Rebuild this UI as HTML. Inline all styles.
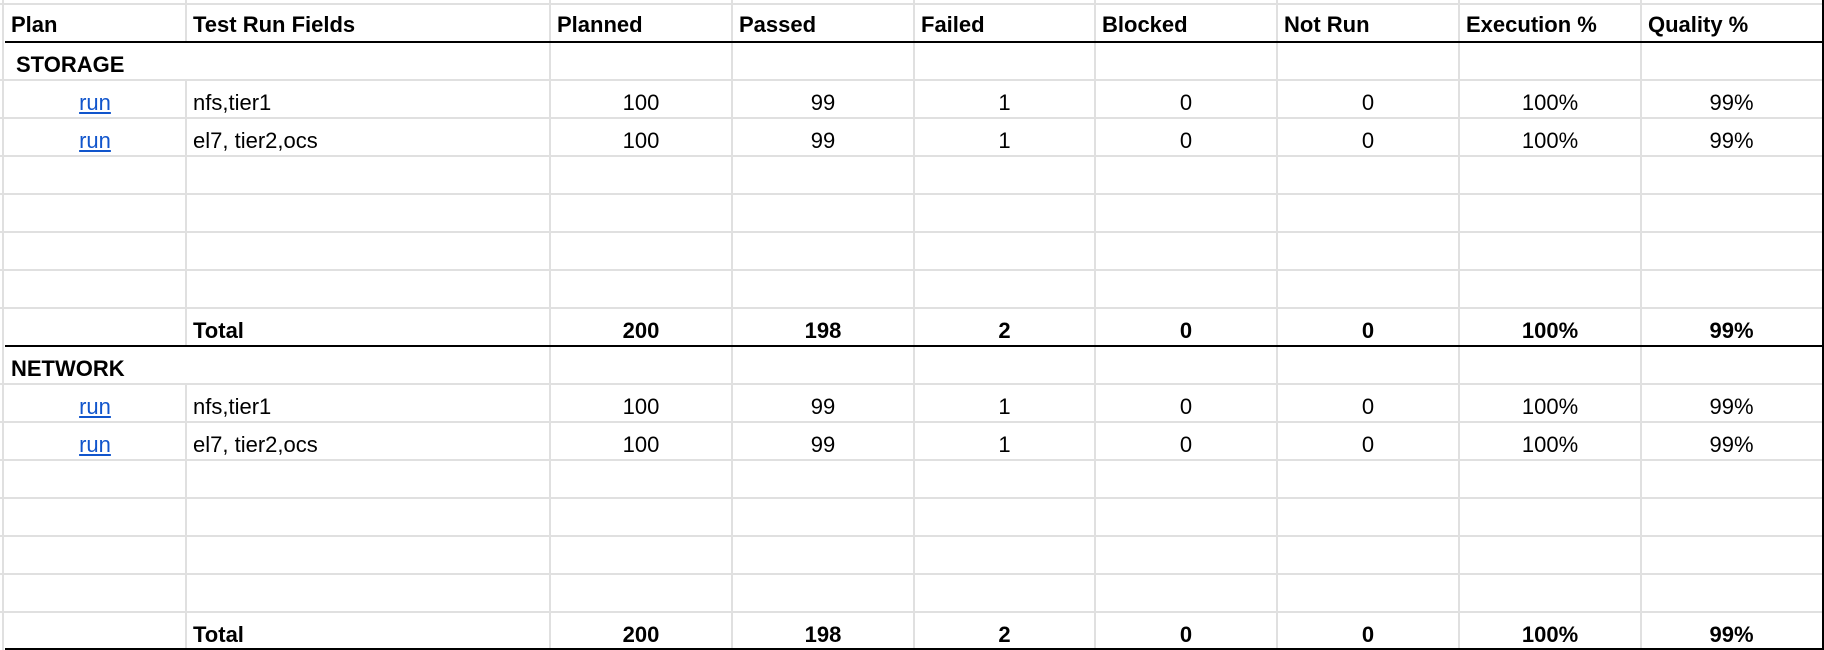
<!DOCTYPE html>
<html><head><meta charset="utf-8"><style>
html,body{margin:0;padding:0;background:#fff;width:1824px;height:650px;overflow:hidden;position:relative;font-family:"Liberation Sans",sans-serif;color:#000}
.h{position:absolute;left:0;width:1824px;height:2px;background:#e0e0e0}
.v{position:absolute;width:2px;background:#e0e0e0}
.b{position:absolute;left:5px;width:1819px;height:2px;background:#000}
.t{position:absolute;font-size:22px;line-height:38px;white-space:nowrap}
.c{text-align:center}
.bo{font-weight:bold}
a{color:#1155cc;text-decoration:underline}
</style></head><body>
<div class="h" style="top:3px"></div>
<div class="v" style="left:2px;top:0;height:650px"></div>
<div id="g"></div>
<script>
var cols=[186,550,732,914,1095,1277,1459,1641];
var g=document.getElementById('g'),h='';
for(var i=0;i<cols.length;i++){h+='<div class="v" style="left:'+(cols[i]-1)+'px;top:0;height:650px"></div>';}
for(var r=1;r<=16;r++){var y=42+38*r;if(r!=8&&r!=16)h+='<div class="h" style="top:'+(y-1)+'px"></div>';}
h+='<div style="position:absolute;left:5px;top:43px;width:540px;height:36px;background:#fff"></div>';
h+='<div style="position:absolute;left:5px;top:347px;width:540px;height:36px;background:#fff"></div>';
h+='<div class="b" style="top:41px"></div><div class="b" style="top:345px"></div><div class="b" style="top:648px"></div>';
h+='<div style="position:absolute;left:1822px;top:0;width:2px;height:650px;background:#000"></div>';
var hd=['Plan','Test Run Fields','Planned','Passed','Failed','Blocked','Not Run','Execution %','Quality %'];
var xs=[4].concat(cols);
for(var i=0;i<hd.length;i++)h+='<div class="t bo" style="left:'+(xs[i]+7)+'px;top:6px">'+hd[i]+'</div>';
function sec(top,name,nx){
 h+='<div class="t bo" style="left:'+nx+'px;top:'+(top+4)+'px">'+name+'</div>';
 var data=[['nfs,tier1'],['el7, tier2,ocs']];
 var vals=['100','99','1','0','0','100%','99%'];
 for(var k=0;k<2;k++){var y=top+38*(k+1)+4;
  h+='<div class="t c" style="left:4px;width:182px;top:'+y+'px"><a>run</a></div>';
  h+='<div class="t" style="left:193px;top:'+y+'px">'+data[k][0]+'</div>';
  for(var j=0;j<7;j++)h+='<div class="t c" style="left:'+xs[j+2]+'px;width:'+((xs[j+3]||1822)-xs[j+2])+'px;top:'+y+'px">'+vals[j]+'</div>';}
 var y=top+38*7+4;var tv=['200','198','2','0','0','100%','99%'];
 h+='<div class="t bo" style="left:193px;top:'+y+'px">Total</div>';
 for(var j=0;j<7;j++)h+='<div class="t c bo" style="left:'+xs[j+2]+'px;width:'+((xs[j+3]||1822)-xs[j+2])+'px;top:'+y+'px">'+tv[j]+'</div>';
}
sec(42,'STORAGE',16);sec(346,'NETWORK',11);
g.innerHTML=h;
</script>
</body></html>
